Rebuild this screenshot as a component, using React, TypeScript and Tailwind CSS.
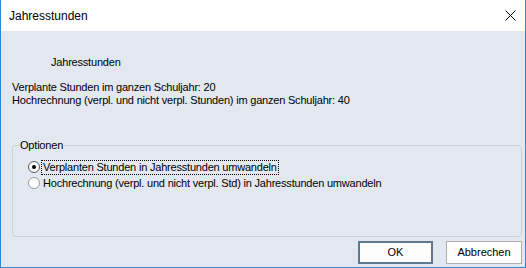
import React from "react";

const font = { fontFamily: '"Liberation Sans", Arial, sans-serif' };

function Radio({ checked, label, focused }: { checked?: boolean; label: string; focused?: boolean }) {
  return (
    <div className="flex h-[16px] items-center">
      <span
        className={`flex h-[12px] w-[12px] shrink-0 items-center justify-center rounded-full border bg-white ${
          checked ? "border-[#5a5a5a]" : "border-[#9a9a9a]"
        }`}
      >
        {checked && <span className="h-[4px] w-[4px] rounded-full bg-black" />}
      </span>
      <span
        className={`ml-[1px] h-[15px] whitespace-nowrap pl-[1px] pr-[1px] leading-[13px] ${
          focused ? "border border-dotted border-black" : "border border-transparent"
        }`}
      >
        {label}
      </span>
    </div>
  );
}

export default function App() {
  return (
    <div
      className="flex h-[268px] w-[526px] flex-col border-x border-b border-[#2b88d8] bg-[#e3e8f0] text-[11px] tracking-[-0.2px] text-black"
      style={font}
    >
      {/* title bar */}
      <div className="flex h-[31px] shrink-0 items-center justify-between bg-white pl-[8px] pr-[9px]">
        <span className="text-[12px] tracking-normal">Jahresstunden</span>
        <svg width="11" height="11" viewBox="0 0 11 11" className="text-black">
          <path d="M0.5 0.5 L10.5 10.5 M10.5 0.5 L0.5 10.5" stroke="currentColor" strokeWidth="1" />
        </svg>
      </div>

      {/* body */}
      <div className="flex flex-1 flex-col">
        <div className="ml-[50px] mt-[25px] h-[13px] leading-[13px]">Jahresstunden</div>
        <div className="ml-[11px] mt-[12px] leading-[13px]">
          <div>Verplante Stunden im ganzen Schuljahr: 20</div>
          <div>Hochrechnung (verpl. und nicht verpl. Stunden) im ganzen Schuljahr: 40</div>
        </div>

        <div className="relative ml-[11px] mt-[38px] h-[92px] w-[510px] rounded-[3px] border border-[#cdd2d9] pl-[15px] pt-[13px]">
          <span className="absolute -top-[7px] left-[6px] bg-[#e3e8f0] px-[1px] leading-[13px]">Optionen</span>
          <Radio checked focused label="Verplanten Stunden in Jahresstunden umwandeln" />
          <Radio label="Hochrechnung (verpl. und nicht verpl. Std) in Jahresstunden umwandeln" />
        </div>

        <div className="mr-[3px] mt-[4px] flex justify-end gap-[13px] tracking-normal">
          <button className="h-[23px] w-[75px] border-2 border-[#5f7791] bg-[#fdfdfd] text-[11px]">OK</button>
          <button className="h-[23px] w-[76px] border border-[#adadad] bg-[#fdfdfd] text-[11px]">Abbrechen</button>
        </div>
      </div>
    </div>
  );
}
